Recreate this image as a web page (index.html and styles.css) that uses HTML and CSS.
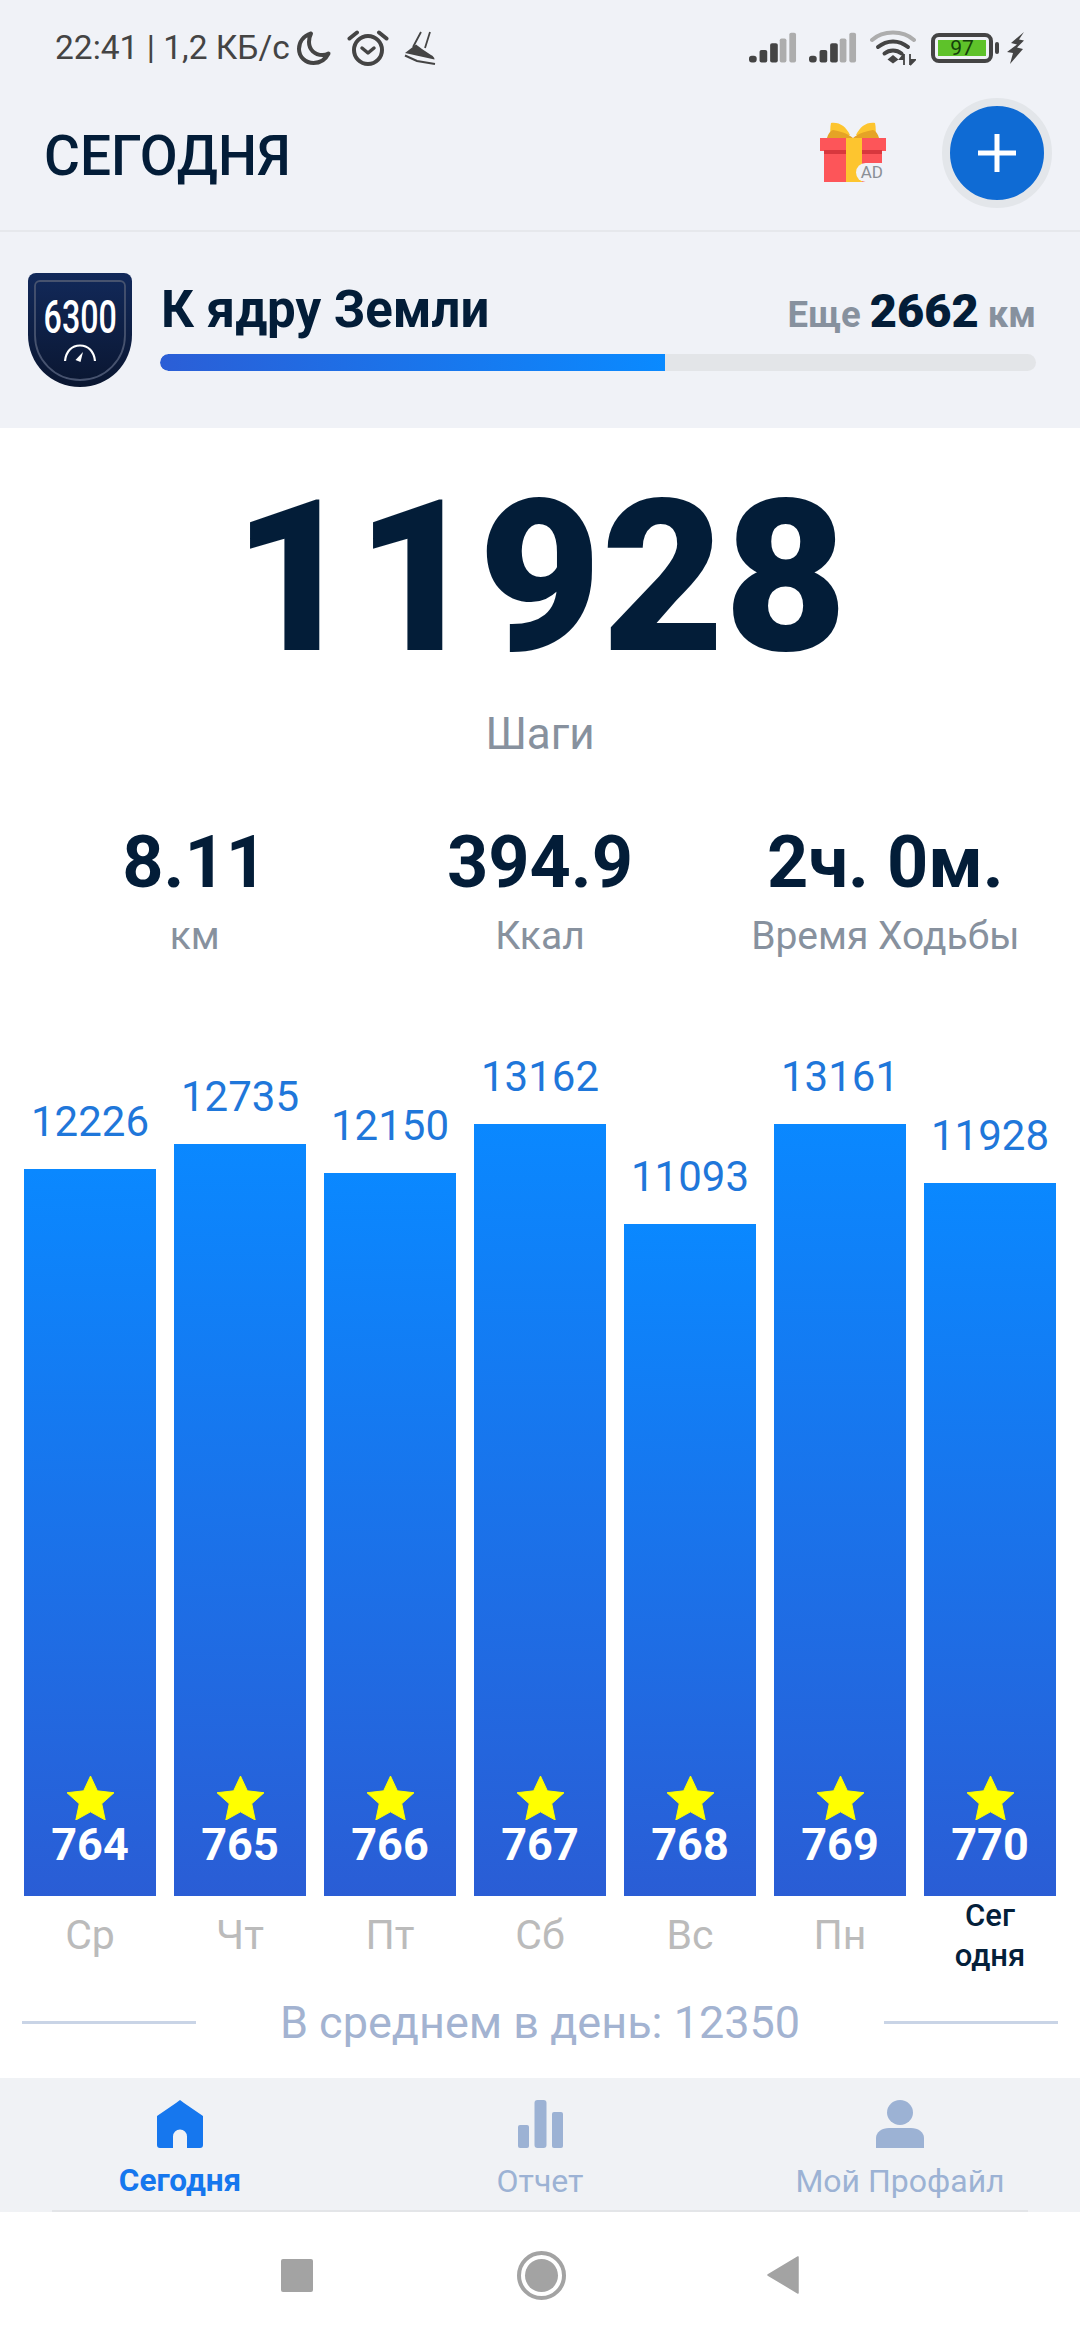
FILE: index.html
```html
<!DOCTYPE html>
<html lang="ru">
<head>
    <meta charset="UTF-8">
    <title>Шаги</title>
    <link rel="stylesheet" href="styles.css">
</head>
<body>
    <div class="app">
        <div class="status-bar">
            <div class="status-left">
                <span class="status-text">22:41 | 1,2 КБ/с</span>
                <svg class="ic-moon" width="36" height="36" viewBox="0 0 36 36"><path d="M15 3.500C7.500 6 3 12 3 19c0 8 6.500 14 14.500 14 6.500 0 12-3.500 15-9.500-1.800 1-3.800 1.500-6 1.500C18.500 25 13 19.500 13 12c0-3 .7-6 2-8.500z" fill="none" stroke="#444" stroke-width="4" stroke-linejoin="round"/></svg>
                <svg class="ic-alarm" width="42" height="36" viewBox="0 0 42 36"><circle cx="21" cy="20" r="14" fill="none" stroke="#444" stroke-width="4"/><path d="M15 18l6 5 6-5" fill="none" stroke="#444" stroke-width="3.500" stroke-linecap="round" stroke-linejoin="round"/><path d="M2.500 8.500L10 2.500M39.500 8.500L32 2.500" stroke="#444" stroke-width="4" stroke-linecap="round"/></svg>
                <svg class="ic-shoe" width="32" height="34" viewBox="0 0 32 34"><path d="M17 1l-8 15M26 1l-5 16" fill="none" stroke="#444" stroke-width="1.800"/><path d="M1 22L12 13.500l6 4.500 9 6c2 1 3.500 2.500 3.500 4.500z" fill="#444"/><path d="M1 24.500L13 30l18 3" fill="none" stroke="#444" stroke-width="2"/></svg>
            </div>
            <div class="status-right">
                <svg class="ic-signal" width="48" height="32" viewBox="0 0 50 32"><rect x="0" y="24" width="8" height="7" rx="3" fill="#444"/><rect x="11" y="18" width="8" height="13" rx="2" fill="#444"/><rect x="22" y="11" width="8" height="20" rx="2" fill="#444"/><rect x="32" y="6" width="7" height="25" rx="2" fill="#adadad"/><rect x="42" y="0" width="7" height="31" rx="2" fill="#adadad"/></svg>
                <svg class="ic-signal" width="48" height="32" viewBox="0 0 50 32"><rect x="0" y="24" width="8" height="7" rx="3" fill="#444"/><rect x="11" y="18" width="8" height="13" rx="2" fill="#444"/><rect x="22" y="11" width="8" height="20" rx="2" fill="#444"/><rect x="32" y="6" width="7" height="25" rx="2" fill="#adadad"/><rect x="42" y="0" width="7" height="31" rx="2" fill="#adadad"/></svg>
                <svg class="ic-wifi" width="46" height="36" viewBox="0 0 46 36"><path d="M2 10C13 0 33 0 44 10" fill="none" stroke="#adadad" stroke-width="4" stroke-linecap="round"/><path d="M8 17c9-7.500 21-7.500 30 0M14.500 23.500c5-4 12-4 17 0" fill="none" stroke="#444" stroke-width="4" stroke-linecap="round"/><path d="M23 25l5.500 4.500-5.500 4-5.500-4z" fill="#444"/><path d="M34 24v11M34 24l-4 5h4M40 35V24M40 35l5-5h-5" fill="#444" stroke="#444" stroke-width="1.800"/></svg>
                <div class="battery">
                    <div class="battery-body"><span class="battery-level">97</span></div>
                    <div class="battery-tip"></div>
                </div>
                <svg class="ic-bolt" width="18" height="32" viewBox="0 0 18 32"><path d="M17 0L4 11l6 1.500L0 20l6 1-3 11 13-15-6-1.500 7-7-5-1z" fill="#444"/></svg>
            </div>
        </div>

        <header class="top-bar">
            <h1 class="page-title">СЕГОДНЯ</h1>
            <div class="top-actions">
                <div class="gift">
                    <svg width="66" height="60" viewBox="0 0 66 60"><path d="M30 13C26 5 20 0 11 1c-1 5-1 9 0 13z" fill="#fdc52f"/><path d="M36 13C40 5 46 0 55 1c1 5 1 9 0 13z" fill="#fdc52f"/><path d="M7 16c1-4 3-7 6-8 6 1 14 3 20 8 6-5 14-7 20-8 3 1 5 4 6 8z" fill="#e5a326"/><rect x="0" y="16" width="66" height="13" fill="#fd5559"/><rect x="4" y="29" width="58" height="31" fill="#fd5559"/><rect x="4" y="28" width="58" height="4" fill="#d8373d"/><rect x="26" y="16" width="16" height="44" fill="#fdc52f"/></svg>
                    <span class="gift-ad">AD</span>
                </div>
                <div class="add-btn">
                    <svg width="40" height="40" viewBox="0 0 40 40"><path d="M20 1v38M1 20h38" stroke="#fff" stroke-width="5"/></svg>
                </div>
            </div>
        </header>

        <section class="goal">
            <div class="goal-badge">
                <svg width="104" height="114" viewBox="0 0 104 114">
                    <defs>
                        <linearGradient id="badgeFill" x1="0" y1="0" x2="0" y2="1">
                            <stop offset="0" stop-color="#12295a"/>
                            <stop offset="1" stop-color="#0a1630"/>
                        </linearGradient>
                    </defs>
                    <path d="M8 0h88a8 8 0 0 1 8 8v54c0 29-23 52-52 52S0 91 0 62V8a8 8 0 0 1 8-8z" fill="url(#badgeFill)"/>
                    <path d="M12 8h80a5 5 0 0 1 5 5v49c0 25-20 45-45 45S7 87 7 62V13a5 5 0 0 1 5-5z" fill="none" stroke="#47536f" stroke-width="1.800"/>
                    <path d="M37 88c1-10 7-15.500 15-15.500S66 78 67 88" fill="none" stroke="#fff" stroke-width="2.200"/>
                    <path d="M47.500 87l7.500-8-2.500 10z" fill="#fff"/>
                </svg>
                <span class="badge-label">6300</span>
            </div>
            <div class="goal-info">
                <div class="goal-head">
                    <span class="goal-title">К ядру Земли</span>
                    <span class="goal-left">Еще <b>2662</b> км</span>
                </div>
                <div class="goal-track"><div class="goal-fill"></div></div>
            </div>
        </section>

        <main class="content">
            <div class="steps">11928</div>
            <div class="steps-label">Шаги</div>

            <div class="stats">
                <div class="stat"><div class="stat-value">8.11</div><div class="stat-label">км</div></div>
                <div class="stat"><div class="stat-value">394.9</div><div class="stat-label">Ккал</div></div>
                <div class="stat"><div class="stat-value">2ч. 0м.</div><div class="stat-label">Время Ходьбы</div></div>
            </div>

            <div class="chart">
                <div class="col">
                    <span class="col-value">12226</span>
                    <div class="bar" style="height: 727px">
                        <svg class="star" width="47" height="44" viewBox="0 0 48 46" preserveAspectRatio="none"><use href="#star"/></svg>
                        <span class="bar-num">764</span>
                    </div>
                    <span class="col-day">Ср</span>
                </div>
                <div class="col">
                    <span class="col-value">12735</span>
                    <div class="bar" style="height: 752px">
                        <svg class="star" width="47" height="44" viewBox="0 0 48 46" preserveAspectRatio="none"><use href="#star"/></svg>
                        <span class="bar-num">765</span>
                    </div>
                    <span class="col-day">Чт</span>
                </div>
                <div class="col">
                    <span class="col-value">12150</span>
                    <div class="bar" style="height: 723px">
                        <svg class="star" width="47" height="44" viewBox="0 0 48 46" preserveAspectRatio="none"><use href="#star"/></svg>
                        <span class="bar-num">766</span>
                    </div>
                    <span class="col-day">Пт</span>
                </div>
                <div class="col">
                    <span class="col-value">13162</span>
                    <div class="bar" style="height: 772px">
                        <svg class="star" width="47" height="44" viewBox="0 0 48 46" preserveAspectRatio="none"><use href="#star"/></svg>
                        <span class="bar-num">767</span>
                    </div>
                    <span class="col-day">Сб</span>
                </div>
                <div class="col">
                    <span class="col-value">11093</span>
                    <div class="bar" style="height: 672px">
                        <svg class="star" width="47" height="44" viewBox="0 0 48 46" preserveAspectRatio="none"><use href="#star"/></svg>
                        <span class="bar-num">768</span>
                    </div>
                    <span class="col-day">Вс</span>
                </div>
                <div class="col">
                    <span class="col-value">13161</span>
                    <div class="bar" style="height: 772px">
                        <svg class="star" width="47" height="44" viewBox="0 0 48 46" preserveAspectRatio="none"><use href="#star"/></svg>
                        <span class="bar-num">769</span>
                    </div>
                    <span class="col-day">Пн</span>
                </div>
                <div class="col">
                    <span class="col-value">11928</span>
                    <div class="bar" style="height: 713px">
                        <svg class="star" width="47" height="44" viewBox="0 0 48 46" preserveAspectRatio="none"><use href="#star"/></svg>
                        <span class="bar-num">770</span>
                    </div>
                    <span class="col-day today">Сег<br>одня</span>
                </div>
            </div>

            <div class="average">
                <div class="average-line"></div>
                <span>В среднем в день: 12350</span>
                <div class="average-line"></div>
            </div>
        </main>

        <nav class="tabs">
            <div class="tab active">
                <svg width="46" height="48" viewBox="0 0 46 48"><path d="M23 0l4 3 19 13v29a3 3 0 0 1-3 3H30V36.500a6.750 6.750 0 0 0-14 0V48H3a3 3 0 0 1-3-3V16L19 3z" fill="#1677ee"/></svg>
                <span>Сегодня</span>
            </div>
            <div class="tab">
                <svg width="45" height="48" viewBox="0 0 45 48"><rect x="0" y="25" width="11" height="23" rx="2" fill="#9cb2d4"/><rect x="16.500" y="0" width="12" height="48" rx="3" fill="#9cb2d4"/><rect x="34" y="12" width="11" height="36" rx="2" fill="#9cb2d4"/></svg>
                <span>Отчет</span>
            </div>
            <div class="tab">
                <svg width="48" height="48" viewBox="0 0 48 48"><ellipse cx="24" cy="12.500" rx="13" ry="12.500" fill="#9cb2d4"/><path d="M13 28h22c7 0 13 4 13 10v10H0V38c0-6 6-10 13-10z" fill="#9cb2d4"/></svg>
                <span>Мой Профайл</span>
            </div>
        </nav>

        <div class="system-nav">
            <div class="sys-square"></div>
            <div class="sys-circle"><div class="sys-dot"></div></div>
            <svg class="sys-back" width="32" height="38" viewBox="0 0 32 38"><path d="M31 1v36L1 19z" fill="#a3a3a3" stroke="#a3a3a3" stroke-width="1.500" stroke-linejoin="round"/></svg>
        </div>
    </div>

    <svg class="defs" width="0" height="0">
        <defs>
            <path id="star" d="M24 0l7 15.500 17 2-12.500 11.500L39 46 24 37.500 9 46l3.500-17L0 17.500l17-2z" fill="#ffff00" stroke="#ffff00" stroke-width="1" stroke-linejoin="round"/>
        </defs>
    </svg>
</body>
</html>
```

FILE: styles.css
```css
* {
    box-sizing: border-box;
}
body {
    margin: 0;
    background: white;
    font-family: Roboto, "Noto Sans", sans-serif;
}
.app {
    width: 1080px;
    height: 2340px;
    display: flex;
    flex-direction: column;
    overflow: hidden;
}
.defs {
    position: absolute;
}

/* status bar */
.status-bar {
    height: 96px;
    background: #f0f2f7;
    display: flex;
    justify-content: space-between;
    align-items: center;
    padding: 0 55px 0 55px;
}
.status-left,
.status-right {
    display: flex;
    align-items: center;
}
.status-text {
    font-size: 33.500px;
    color: #444;
    line-height: 96px;
}
.ic-moon {
    margin-left: 6px;
}
.ic-alarm {
    margin-left: 15px;
}
.ic-shoe {
    margin-left: 15px;
}
.ic-signal {
    margin-right: 12px;
}
.ic-wifi {
    margin-left: 1px;
}
.battery {
    display: flex;
    align-items: center;
    margin-left: 15px;
}
.battery-body {
    width: 62px;
    height: 30px;
    border: 4px solid #444;
    border-radius: 8px;
    padding: 3px;
}
.battery-level {
    display: block;
    height: 16px;
    background: #5ec22a;
    color: #14400a;
    font-size: 21px;
    line-height: 16px;
    text-align: center;
}
.battery-tip {
    width: 4px;
    height: 12px;
    margin-left: 2px;
    background: #444;
    border-radius: 2px;
}
.ic-bolt {
    margin-left: 8px;
}

/* header */
.top-bar {
    height: 136px;
    background: #f0f2f7;
    border-bottom: 2px solid #e6e8ec;
    display: flex;
    justify-content: space-between;
    align-items: center;
    padding: 0 28px 20px 44px;
}
.page-title {
    margin: 6px 0 0;
    font-size: 55px;
    font-weight: 500;
    color: #031d38;
}
.top-actions {
    display: flex;
    align-items: center;
    gap: 56px;
}
.gift {
    position: relative;
    width: 66px;
    height: 60px;
    margin-top: -2px;
}
.gift svg {
    display: block;
}
.gift-ad {
    position: absolute;
    right: 3px;
    bottom: 0;
    padding-left: 5px;
    border-radius: 10px 0 0 10px;
    background: #f0f2f7;
    color: #8a8f96;
    font-size: 17px;
    line-height: 19px;
}
.add-btn {
    width: 110px;
    height: 110px;
    border-radius: 50%;
    background: #0f6bd4;
    border: 8px solid #e3e6ea;
    display: flex;
    align-items: center;
    justify-content: center;
}

/* goal */
.goal {
    height: 196px;
    background: #f0f2f7;
    display: flex;
    align-items: flex-start;
    padding: 41px 44px 0 28px;
}
.goal-badge {
    flex: none;
    position: relative;
    width: 104px;
    height: 114px;
}
.goal-badge svg {
    display: block;
}
.badge-label {
    position: absolute;
    top: 21px;
    left: 0;
    width: 104px;
    font-size: 46px;
    line-height: 46px;
    font-weight: 500;
    color: white;
    text-align: center;
    white-space: nowrap;
    transform: scaleX(.7);
}
.goal-info {
    flex: 1;
    margin-left: 28px;
}
.goal-head {
    display: flex;
    justify-content: space-between;
    align-items: baseline;
    height: 81px;
    padding-top: 7px;
}
.goal-title {
    font-size: 51px;
    font-weight: 700;
    color: #031d38;
    margin-left: 1px;
}
.goal-left {
    font-size: 36.500px;
    font-weight: 700;
    color: #87919e;
}
.goal-left b {
    font-size: 47px;
    color: #031d38;
}
.goal-track {
    height: 17px;
    background: #e3e5e8;
    border-radius: 9px;
    overflow: hidden;
}
.goal-fill {
    width: 505px;
    height: 17px;
    background: linear-gradient(to right, #2b5ed6, #0a8aff);
    border-radius: 9px 0 0 9px;
}

/* main */
.content {
    flex: 1;
    background: white;
}
.steps {
    margin-top: 35px;
    font-size: 212px;
    line-height: 230px;
    font-weight: 900;
    color: #031d38;
    text-align: center;
}
.steps-label {
    margin-top: 16px;
    font-size: 44px;
    line-height: 50px;
    color: #87919e;
    text-align: center;
}
.stats {
    display: grid;
    grid-template-columns: repeat(3, 1fr);
    margin-top: 64px;
    padding: 0 22px;
}
.stat {
    text-align: center;
}
.stat-value {
    font-size: 72px;
    line-height: 80px;
    font-weight: 700;
    color: #031d38;
}
.stat-label {
    margin-top: 8px;
    font-size: 39px;
    line-height: 50px;
    color: #87919e;
}

/* chart */
.chart {
    height: 1007px;
    display: grid;
    grid-template-columns: repeat(7, 132px);
    gap: 18px;
    padding: 0 24px;
    align-items: end;
}
.col {
    display: flex;
    flex-direction: column;
    align-items: center;
}
.col-value {
    font-size: 42px;
    line-height: 48px;
    color: #1f77da;
    margin-bottom: 23px;
}
.bar {
    width: 132px;
    background: linear-gradient(to bottom, #0a88ff, #2a5dd5);
    display: flex;
    flex-direction: column;
    align-items: center;
    justify-content: flex-end;
    padding-bottom: 24px;
}
.star {
    display: block;
    margin-bottom: -2px;
}
.bar-num {
    font-size: 45px;
    line-height: 54px;
    font-weight: 700;
    color: white;
}
.col-day {
    height: 72px;
    padding-top: 15px;
    font-size: 41px;
    line-height: 48px;
    color: #bbb;
    text-align: center;
}
.col-day.today {
    padding-top: 0;
    font-size: 31px;
    line-height: 40px;
    font-weight: 500;
    color: #04203a;
}

.average {
    display: flex;
    align-items: center;
    justify-content: space-between;
    padding: 0 22px;
    height: 108px;
    font-size: 45px;
    color: #a3b3d1;
}
.average-line {
    width: 174px;
    height: 3px;
    background: #c9d4e6;
}

/* tabs */
.tabs {
    height: 134px;
    background: #f0f2f5;
    display: grid;
    grid-template-columns: repeat(3, 1fr);
    padding-top: 22px;
    position: relative;
}
.tabs::after {
    content: "";
    position: absolute;
    left: 52px;
    right: 52px;
    bottom: 0;
    height: 2px;
    background: #e3e5e8;
}
.tab {
    display: flex;
    flex-direction: column;
    align-items: center;
    font-size: 32px;
    line-height: 40px;
    color: #9cb2d4;
    gap: 13px;
}
.tab.active {
    color: #1677ee;
    font-size: 31.500px;
    font-weight: 700;
}

/* android nav */
.system-nav {
    height: 128px;
    background: white;
    display: flex;
    align-items: center;
    justify-content: center;
    gap: 204px;
    padding-bottom: 2px;
}
.sys-square {
    width: 32px;
    height: 33px;
    background: #a3a3a3;
    border-radius: 2px;
}
.sys-circle {
    width: 49px;
    height: 49px;
    border: 4px solid #a3a3a3;
    border-radius: 50%;
    display: flex;
    align-items: center;
    justify-content: center;
}
.sys-dot {
    width: 33px;
    height: 33px;
    background: #a3a3a3;
    border-radius: 50%;
}
.sys-back {
    margin-left: -3px;
}
```
